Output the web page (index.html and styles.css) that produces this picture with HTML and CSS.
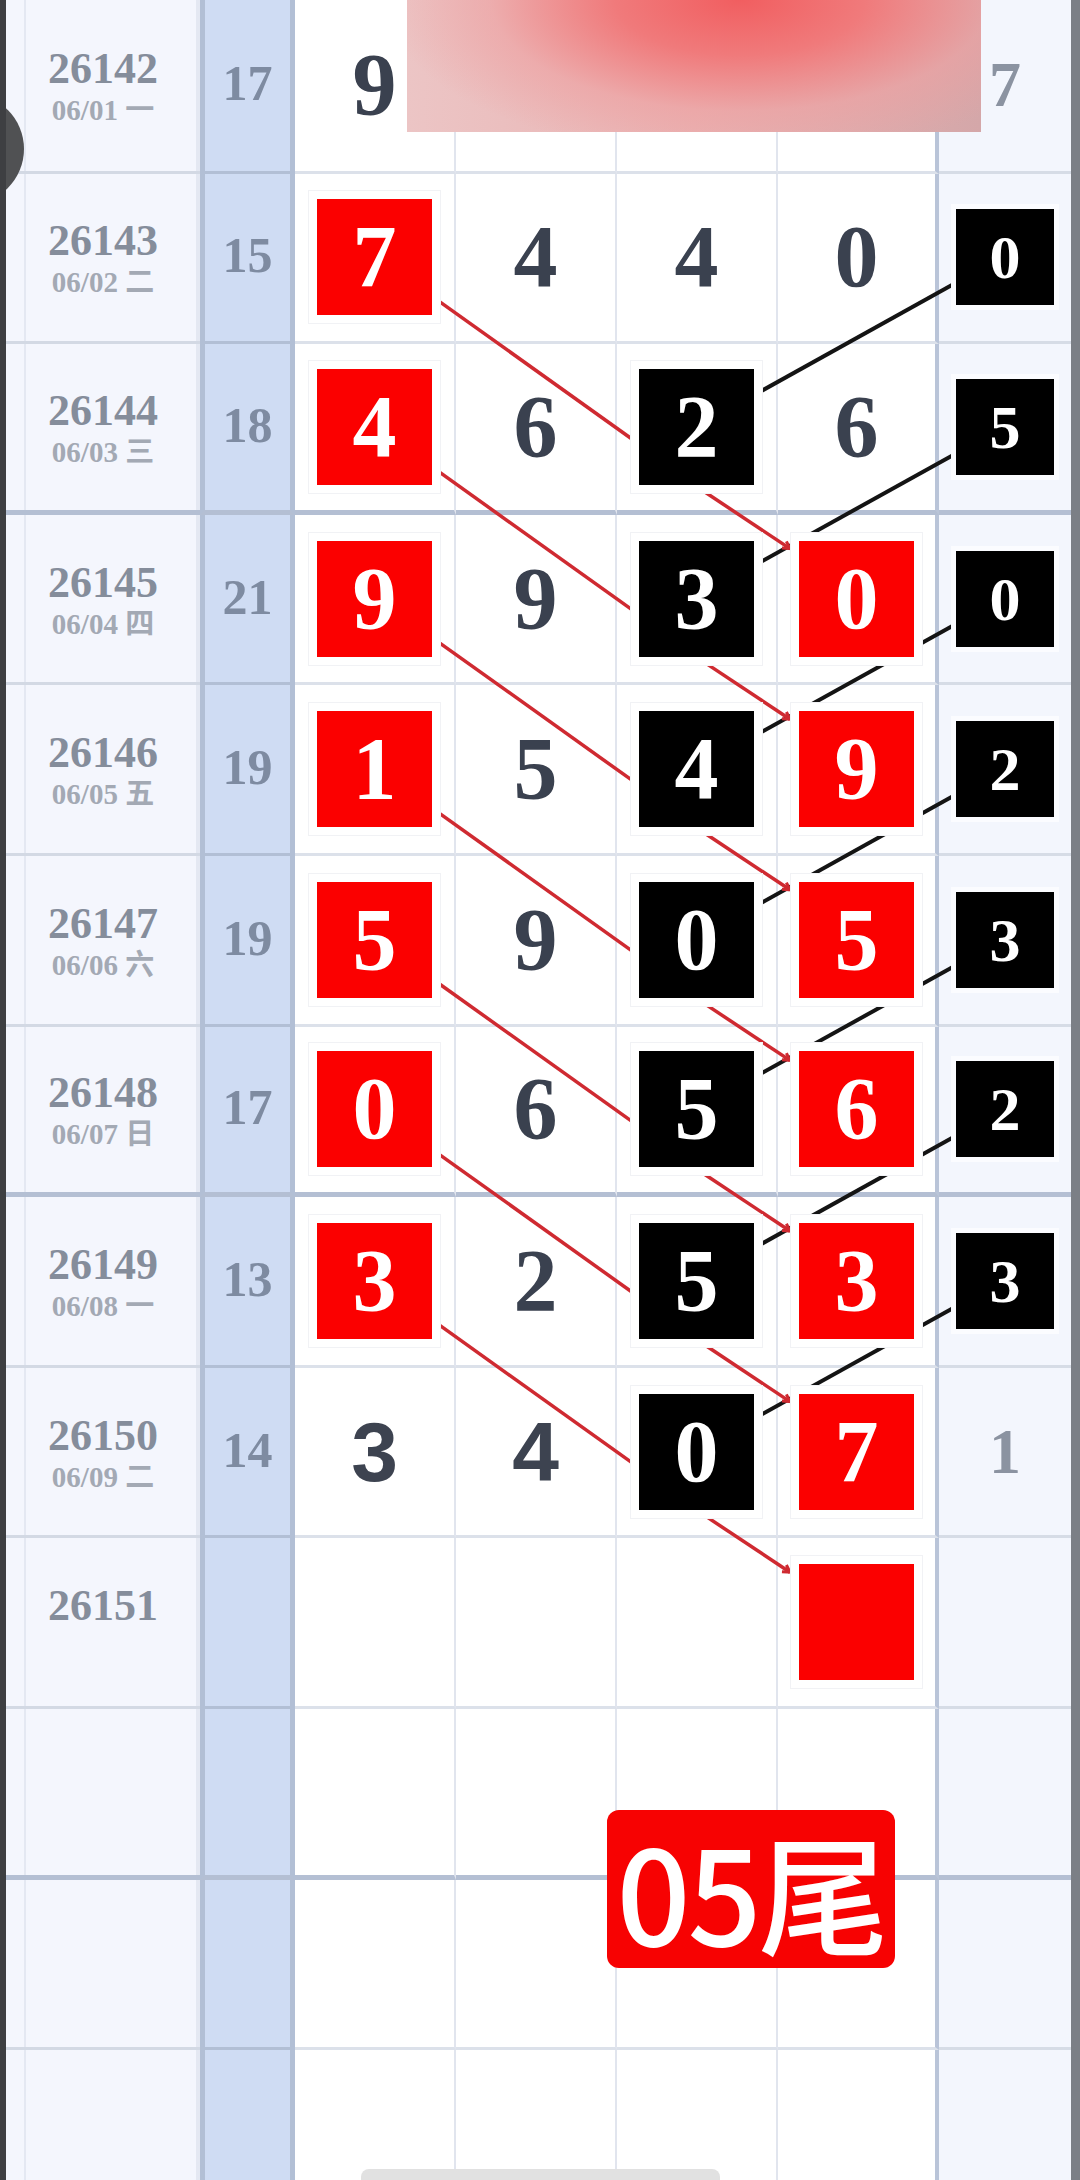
FILE: index.html
```html
<!DOCTYPE html>
<html lang="zh">
<head>
    <meta charset="UTF-8">
    <meta name="viewport" content="width=device-width, initial-scale=1.0">
    <title>尾数走势</title>
    <link rel="stylesheet" href="styles.css">
</head>
<body>
    <div class="screen">
        <div class="chart">
            <div class="row first">
                <div class="cell period"><span class="issue">26142</span><span class="date">06/01 一</span></div>
                <div class="cell sum">17</div>
                <div class="cell num"><span class="plain">9</span></div>
                <div class="cell num"></div>
                <div class="cell num"></div>
                <div class="cell num c4"></div>
                <div class="cell tail"><span class="gray">7</span></div>
            </div>
            <div class="row">
                <div class="cell period"><span class="issue">26143</span><span class="date">06/02 二</span></div>
                <div class="cell sum">15</div>
                <div class="cell num"><span class="box red">7</span></div>
                <div class="cell num"><span class="plain">4</span></div>
                <div class="cell num"><span class="plain">4</span></div>
                <div class="cell num c4"><span class="plain">0</span></div>
                <div class="cell tail"><span class="mini">0</span></div>
            </div>
            <div class="row sep">
                <div class="cell period"><span class="issue">26144</span><span class="date">06/03 三</span></div>
                <div class="cell sum">18</div>
                <div class="cell num"><span class="box red">4</span></div>
                <div class="cell num"><span class="plain">6</span></div>
                <div class="cell num"><span class="box black">2</span></div>
                <div class="cell num c4"><span class="plain">6</span></div>
                <div class="cell tail"><span class="mini">5</span></div>
            </div>
            <div class="row">
                <div class="cell period"><span class="issue">26145</span><span class="date">06/04 四</span></div>
                <div class="cell sum">21</div>
                <div class="cell num"><span class="box red">9</span></div>
                <div class="cell num"><span class="plain">9</span></div>
                <div class="cell num"><span class="box black">3</span></div>
                <div class="cell num c4"><span class="box red">0</span></div>
                <div class="cell tail"><span class="mini">0</span></div>
            </div>
            <div class="row">
                <div class="cell period"><span class="issue">26146</span><span class="date">06/05 五</span></div>
                <div class="cell sum">19</div>
                <div class="cell num"><span class="box red">1</span></div>
                <div class="cell num"><span class="plain">5</span></div>
                <div class="cell num"><span class="box black">4</span></div>
                <div class="cell num c4"><span class="box red">9</span></div>
                <div class="cell tail"><span class="mini">2</span></div>
            </div>
            <div class="row">
                <div class="cell period"><span class="issue">26147</span><span class="date">06/06 六</span></div>
                <div class="cell sum">19</div>
                <div class="cell num"><span class="box red">5</span></div>
                <div class="cell num"><span class="plain">9</span></div>
                <div class="cell num"><span class="box black">0</span></div>
                <div class="cell num c4"><span class="box red">5</span></div>
                <div class="cell tail"><span class="mini">3</span></div>
            </div>
            <div class="row sep">
                <div class="cell period"><span class="issue">26148</span><span class="date">06/07 日</span></div>
                <div class="cell sum">17</div>
                <div class="cell num"><span class="box red">0</span></div>
                <div class="cell num"><span class="plain">6</span></div>
                <div class="cell num"><span class="box black">5</span></div>
                <div class="cell num c4"><span class="box red">6</span></div>
                <div class="cell tail"><span class="mini">2</span></div>
            </div>
            <div class="row">
                <div class="cell period"><span class="issue">26149</span><span class="date">06/08 一</span></div>
                <div class="cell sum">13</div>
                <div class="cell num"><span class="box red">3</span></div>
                <div class="cell num"><span class="plain">2</span></div>
                <div class="cell num"><span class="box black">5</span></div>
                <div class="cell num c4"><span class="box red">3</span></div>
                <div class="cell tail"><span class="mini">3</span></div>
            </div>
            <div class="row">
                <div class="cell period"><span class="issue">26150</span><span class="date">06/09 二</span></div>
                <div class="cell sum">14</div>
                <div class="cell num"><span class="plain sans">3</span></div>
                <div class="cell num"><span class="plain sans">4</span></div>
                <div class="cell num"><span class="box black">0</span></div>
                <div class="cell num c4"><span class="box red">7</span></div>
                <div class="cell tail"><span class="gray">1</span></div>
            </div>
            <div class="row">
                <div class="cell period"><span class="issue">26151</span><span class="date">&nbsp;</span></div>
                <div class="cell sum"></div>
                <div class="cell num"></div>
                <div class="cell num"></div>
                <div class="cell num"></div>
                <div class="cell num c4"><span class="box red"></span></div>
                <div class="cell tail"></div>
            </div>
            <div class="row sep">
                <div class="cell period"></div>
                <div class="cell sum"></div>
                <div class="cell num"></div>
                <div class="cell num"></div>
                <div class="cell num"></div>
                <div class="cell num c4"></div>
                <div class="cell tail"></div>
            </div>
            <div class="row">
                <div class="cell period"></div>
                <div class="cell sum"></div>
                <div class="cell num"></div>
                <div class="cell num"></div>
                <div class="cell num"></div>
                <div class="cell num c4"></div>
                <div class="cell tail"></div>
            </div>
            <div class="row">
                <div class="cell period"></div>
                <div class="cell sum"></div>
                <div class="cell num"></div>
                <div class="cell num"></div>
                <div class="cell num"></div>
                <div class="cell num c4"></div>
                <div class="cell tail"></div>
            </div>
        </div>

        <!-- trend lines between the hit boxes -->
        <svg class="links" width="1080" height="2180" viewBox="0 0 1080 2180">
            <defs>
                <marker id="tip" markerUnits="userSpaceOnUse" markerWidth="16" markerHeight="16" refX="12" refY="7" orient="auto">
                    <path d="M5,3 L12,7 L5,11" fill="none" stroke="#cf2a31" stroke-width="3"/>
                </marker>
            </defs>
            <g stroke="#cf2a31" stroke-width="3.5">
                <line x1="436" y1="299.1" x2="634" y2="440.5"/>
                <line x1="436" y1="469.7" x2="634" y2="611.1"/>
                <line x1="436" y1="640.3" x2="634" y2="781.7"/>
                <line x1="436" y1="810.9" x2="634" y2="952.3"/>
                <line x1="436" y1="981.5" x2="634" y2="1122.9"/>
                <line x1="436" y1="1152.1" x2="634" y2="1293.5"/>
                <line x1="436" y1="1322.7" x2="634" y2="1464.1"/>
            </g>
            <g stroke="#141414" stroke-width="4">
                <line x1="956" y1="282.8" x2="759" y2="392.3"/>
                <line x1="956" y1="453.4" x2="759" y2="562.9"/>
                <line x1="956" y1="624" x2="759" y2="733.5"/>
                <line x1="956" y1="794.6" x2="759" y2="904.1"/>
                <line x1="956" y1="965.2" x2="759" y2="1074.7"/>
                <line x1="956" y1="1135.8" x2="759" y2="1245.3"/>
                <line x1="956" y1="1306.4" x2="759" y2="1415.9"/>
            </g>
            <g stroke="#cf2a31" stroke-width="3.5" marker-end="url(#tip)">
                <line x1="703" y1="490.8" x2="790" y2="548.6"/>
                <line x1="703" y1="661.4" x2="790" y2="719.2"/>
                <line x1="703" y1="832" x2="790" y2="889.8"/>
                <line x1="703" y1="1002.6" x2="790" y2="1060.4"/>
                <line x1="703" y1="1173.2" x2="790" y2="1231"/>
                <line x1="703" y1="1343.8" x2="790" y2="1401.6"/>
                <line x1="703" y1="1514.4" x2="790" y2="1572.2"/>
            </g>
        </svg>

        <div class="cover"></div>
        <div class="side-handle"></div>
        <div class="tag">05尾</div>
        <div class="home-bar"></div>
    </div>
</body>
</html>
```
FILE: styles.css
```css
body {
    margin: 0;
    padding: 0;
    background-color: #ffffff;
    font-family: "Liberation Serif", "Noto Sans CJK SC", serif;
}

.screen {
    position: relative;
    width: 1080px;
    height: 2180px;
    overflow: hidden;
    box-sizing: border-box;
    border-left: 6px solid #3e3f42;
    border-right: 9px solid #7b7f86;
    background-color: #f4f6fd;
}

.chart {
    display: flex;
    flex-direction: column;
}

.row {
    display: grid;
    grid-template-columns: 194px 95px repeat(4, 161px) 132px;
    height: 170.6px;
}

.row.first {
    height: 173.6px;
}

.cell {
    display: flex;
    align-items: center;
    justify-content: center;
    box-sizing: border-box;
    border-bottom: 3px solid #dce1ea;
}

.row.sep .cell {
    border-bottom: 5px solid #b4bfd3;
}

.period {
    flex-direction: column;
    background: linear-gradient(to right, transparent 18px, #e4e8f2 18px, #e4e8f2 20px, transparent 20px, transparent 190px, #e4e8f2 190px) #f4f6fd;
    border-bottom-color: #d3d9e4;
    padding-top: 6px;
}

.issue {
    font-size: 44px;
    font-weight: bold;
    line-height: 44px;
    color: #858d9b;
}

.date {
    font-size: 29px;
    font-weight: bold;
    line-height: 38px;
    color: #a3a9b4;
}

.sum {
    background-color: #cfdcf3;
    border-left: 5px solid #b2bfd5;
    border-right: 5px solid #b2bfd5;
    border-bottom-color: #b2bfd5;
    font-size: 50px;
    font-weight: bold;
    color: #7e8ba1;
    padding-bottom: 4px;
}

.num {
    background-color: #ffffff;
    border-right: 2px solid #e1e5ee;
}

.num.c4 {
    border-right: 4px solid #b9c4d8;
}

.tail {
    background-color: #f3f6fd;
    border-bottom-color: #d6dce6;
}

.plain {
    font-size: 88px;
    font-weight: bold;
    line-height: 1;
    color: #3a414f;
}

.plain.sans {
    font-family: "Liberation Sans", sans-serif;
    font-size: 84px;
    color: #3d4350;
}

.gray {
    font-size: 64px;
    font-weight: bold;
    line-height: 1;
    color: #8b93a1;
}

.box {
    position: relative;
    z-index: 2;
    display: flex;
    align-items: center;
    justify-content: center;
    width: 115px;
    height: 116px;
    font-size: 88px;
    font-weight: bold;
    line-height: 1;
    color: #ffffff;
    box-shadow: 0 0 0 8px #ffffff, 0 0 0 9px #f1f2f5;
}

.box.red {
    background-color: #fb0000;
}

.box.black {
    background-color: #000000;
}

.mini {
    position: relative;
    z-index: 2;
    display: flex;
    align-items: center;
    justify-content: center;
    width: 98px;
    height: 96px;
    background-color: #000000;
    color: #ffffff;
    font-size: 62px;
    font-weight: bold;
    line-height: 1;
    box-shadow: 0 0 0 5px #fbfcff;
}

/* overlays */
.links {
    position: absolute;
    left: -6px;
    top: 0;
    z-index: 1;
    pointer-events: none;
}

.cover {
    position: absolute;
    left: 401px;
    top: 0;
    width: 574px;
    height: 132px;
    z-index: 3;
    background:
        radial-gradient(ellipse 62% 120% at 58% 0%, #f15e60 0%, #f07a7b 35%, rgba(238, 160, 161, 0.6) 70%, rgba(238, 180, 180, 0) 100%),
        linear-gradient(to right, #ecc5c5, #e9b3b3 50%, #d4a7a9);
}

.side-handle {
    position: absolute;
    left: -92px;
    top: 94px;
    width: 110px;
    height: 110px;
    border-radius: 50%;
    background-color: #505153;
    z-index: 3;
}

.tag {
    position: absolute;
    left: 601px;
    top: 1810px;
    width: 288px;
    height: 158px;
    z-index: 3;
    box-sizing: border-box;
    display: flex;
    align-items: center;
    justify-content: center;
    background-color: #f70202;
    border-radius: 12px;
    color: #ffffff;
    font-family: "Noto Sans CJK SC", sans-serif;
    font-size: 130px;
    font-weight: 500;
    letter-spacing: -3px;
    line-height: 1;
}

.home-bar {
    position: absolute;
    left: 355px;
    bottom: 0;
    width: 359px;
    height: 11px;
    border-radius: 8px 8px 0 0;
    background-color: #e1e1e1;
    z-index: 3;
}
```
